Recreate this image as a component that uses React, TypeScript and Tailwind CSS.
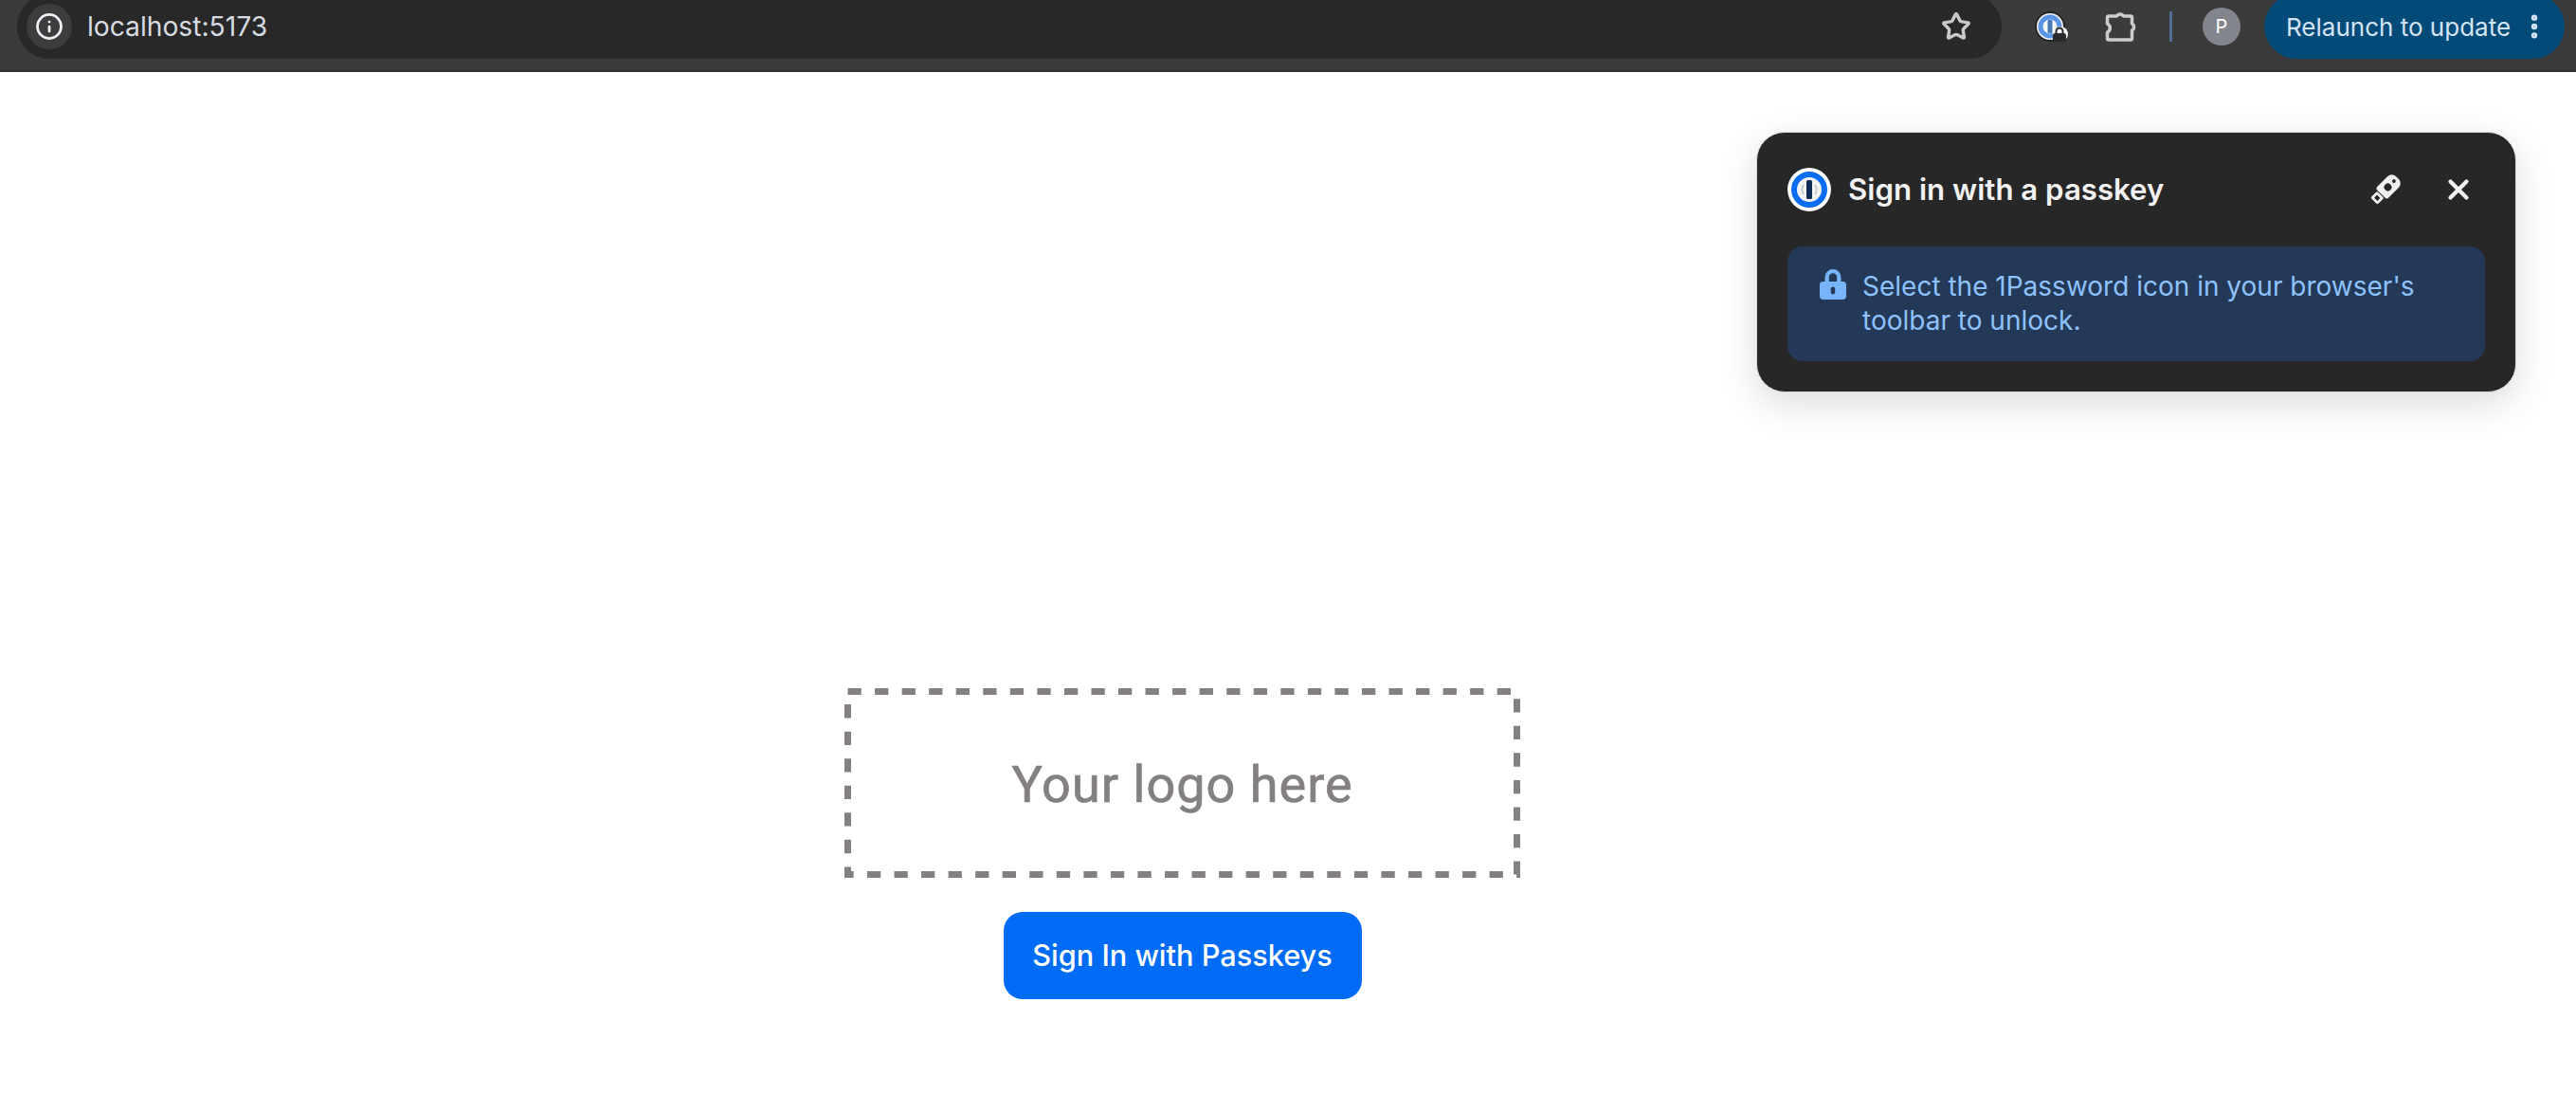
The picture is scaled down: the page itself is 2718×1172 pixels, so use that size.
import { X, Star, Info, EllipsisVertical } from "lucide-react"

const OnePasswordLogo = () => (
  <svg width="46" height="46" viewBox="0 0 46 46" className="shrink-0">
    <circle cx="23" cy="23" r="23" fill="#ffffff" />
    <circle cx="23" cy="23" r="16" fill="#f2f2f2" stroke="#0a6cf0" strokeWidth="6" />
    <path d="M17 18a9 9 0 0 0 0 10M29 18a9 9 0 0 1 0 10" fill="none" stroke="#c4c4c4" strokeWidth="1.5" />
    <rect x="20" y="13" width="6" height="20" rx="1.5" fill="#0f2a55" />
  </svg>
)

const SecurityKeyIcon = () => (
  <svg width="28" height="28" viewBox="0 0 30 30" className="shrink-0 overflow-visible">
    <g transform="rotate(45 15 15)">
      <path
        fillRule="evenodd"
        fill="#f0f0f0"
        d="M13 -4h4a7 7 0 0 1 7 7v16a3 3 0 0 1-3 3H9a3 3 0 0 1-3-3V3a7 7 0 0 1 7-7zM15 7a4.200 4.200 0 1 0 0 8.400a4.200 4.200 0 1 0 0-8.400zM15 -0.500a2 2 0 1 0 0 4a2 2 0 1 0 0-4z"
      />
      <path
        fillRule="evenodd"
        fill="#f0f0f0"
        d="M11 23h8a1.500 1.500 0 0 1 1.500 1.500V32a1.500 1.500 0 0 1-1.500 1.500h-8A1.500 1.500 0 0 1 9.500 32v-7.500A1.500 1.500 0 0 1 11 23zM12.500 26v4.500h5V26z"
      />
    </g>
  </svg>
)

const LockIcon = () => (
  <svg width="30" height="34" viewBox="0 0 30 34" className="-mt-px shrink-0">
    <path
      fillRule="evenodd"
      fill="#78b4fa"
      d="M6.500 14V9.500a8.500 8.500 0 0 1 17 0V14h2a3.500 3.500 0 0 1 3.500 3.500V29a4 4 0 0 1-4 4H5a4 4 0 0 1-4-4V17.500A3.500 3.500 0 0 1 4.500 14zm4.300 0h8.400V9.500a4.200 4.200 0 0 0-8.400 0zM15 19.500c-1.400 0-2.300 1-2.300 2.800v2.400c0 1.800.9 2.800 2.300 2.800s2.300-1 2.300-2.800v-2.400c0-1.800-.9-2.800-2.300-2.800z"
    />
  </svg>
)

const ExtensionLockedIcon = () => (
  <svg width="36" height="36" viewBox="0 0 36 36" className="shrink-0">
    <circle cx="17" cy="18" r="16" fill="#262626" />
    <circle cx="17" cy="18" r="14" fill="#f5f5f5" />
    <circle cx="17" cy="18" r="10" fill="#f5f5f5" stroke="#5b96e6" strokeWidth="5" />
    <rect x="14.500" y="11" width="5" height="14" rx="1" fill="#4a7ab5" />
    <circle cx="28" cy="26" r="8" fill="#f5f5f5" />
    <rect x="20" y="25" width="14" height="9" rx="2.500" fill="#2a2a2e" />
    <path d="M23.500 25v-2a3.500 3.500 0 0 1 7 0v2" fill="none" stroke="#2a2a2e" strokeWidth="2" />
  </svg>
)

const ExtensionsIcon = () => (
  <svg width="34" height="36" viewBox="0 0 34 36" className="shrink-0">
    <path
      fill="none"
      stroke="#cccccc"
      strokeWidth="3.500"
      strokeLinejoin="round"
      d="M4 7h8.500a4 4 0 0 1 7 0H27a1.500 1.500 0 0 1 1.500 1.500V15a4 4 0 0 1 0 7v8.500a1.500 1.500 0 0 1-1.500 1.500H4a1.500 1.500 0 0 1-1.500-1.500V24a5 5 0 0 0 0-9V8.500A1.500 1.500 0 0 1 4 7z"
    />
  </svg>
)

const BrowserBar = () => (
  <div className="h-[76px] shrink-0 border-b-[3px] border-[#343434] bg-[#3b3b3b] pl-[18px] pr-[12px]">
    <div className="-mt-[6px] flex h-[68px]">
      <div className="flex flex-1 items-center rounded-[34px] bg-[#282828] pl-[10px] pr-[32px]">
        <div className="flex h-[48px] w-[48px] items-center justify-center rounded-full bg-[#3d3d3d]">
          <Info size={30} strokeWidth={2.2} className="text-[#eef2f7]" />
        </div>
        <span className="ml-[16px] flex-1 text-[28.2px] text-[#d7dce2] font-['Inter',sans-serif]">localhost:5173</span>
        <Star size={32} strokeWidth={2.6} className="text-[#c8c8c8]" />
      </div>
      <div className="flex items-center">
        <div className="ml-[34px]">
          <ExtensionLockedIcon />
        </div>
        <div className="ml-[39px]">
          <ExtensionsIcon />
        </div>
        <div className="ml-[34px] h-[32px] w-[3px] bg-[#4f6f96]" />
        <div className="ml-[32px] flex h-[40px] w-[40px] items-center justify-center rounded-full bg-[#83858c] text-[20px] text-white font-['Inter',sans-serif]">
          P
        </div>
        <div className="ml-[25px] flex h-[68px] w-[317px] items-center rounded-[34px] bg-[#024a78] pl-[23px]">
          <span className="text-[26px] text-[#d4e4f5] font-['Inter',sans-serif]">Relaunch to update</span>
          <EllipsisVertical size={32} strokeWidth={2.8} className="ml-[9px] text-[#d4e4f5]" />
        </div>
      </div>
    </div>
  </div>
)

const PasskeyPopup = () => (
  <div className="absolute left-[1853px] top-[139px] flex h-[275px] w-[802px] flex-col rounded-[30px] border border-[#d5dce4] bg-[#272727] px-[32px] pt-[37px] shadow-[0_12px_40px_rgba(0,0,0,0.14)] font-['Inter',sans-serif]">
    <div className="flex h-[46px] items-center">
      <OnePasswordLogo />
      <h2 className="ml-[18px] flex-1 text-[31.2px] font-semibold text-[#f2f2f2]">Sign in with a passkey</h2>
      <SecurityKeyIcon />
      <X size={34} strokeWidth={3} className="ml-[46px] mr-[11px] text-[#f0f0f0]" />
    </div>
    <div className="mt-[37px] flex h-[121px] rounded-[16px] bg-[#243957] pl-[33px] pr-[24px] pt-[24px]">
      <LockIcon />
      <p className="ml-[16px] text-[28px] leading-[36px] text-[#8ec2fd]">
        Select the 1Password icon in your browser's toolbar to unlock.
      </p>
    </div>
  </div>
)

// The placeholder is a picture in the original, its dashes are longer than a css dashed border
const LogoPlaceholder = () => (
  <div className="relative flex h-[200px] w-[713px] items-center justify-center">
    <svg width="713" height="200" viewBox="0 0 713 200" className="absolute inset-0">
      <rect x="3.5" y="3.5" width="706" height="193" fill="none" stroke="#848080" strokeWidth="7" strokeDasharray="14.3 14.25" />
    </svg>
    <span className="mt-[2px] text-[54px] tracking-[1px] text-[#848080] [-webkit-text-stroke:0.7px_#848080] font-['Roboto',sans-serif]">Your logo here</span>
  </div>
)

export default function App() {
  return (
    <div className="relative flex h-[1172px] w-[2718px] flex-col overflow-hidden bg-white">
      <BrowserBar />
      <main className="flex flex-1 flex-col items-center pr-[223px] pt-[650px]">
        <LogoPlaceholder />
        <button className="mt-[36px] flex h-[92px] w-[378px] items-center justify-center rounded-[20px] bg-[#006bf5] text-[30.7px] font-[450] text-white font-['Inter',sans-serif]">
          Sign In with Passkeys
        </button>
      </main>
      <PasskeyPopup />
    </div>
  )
}
